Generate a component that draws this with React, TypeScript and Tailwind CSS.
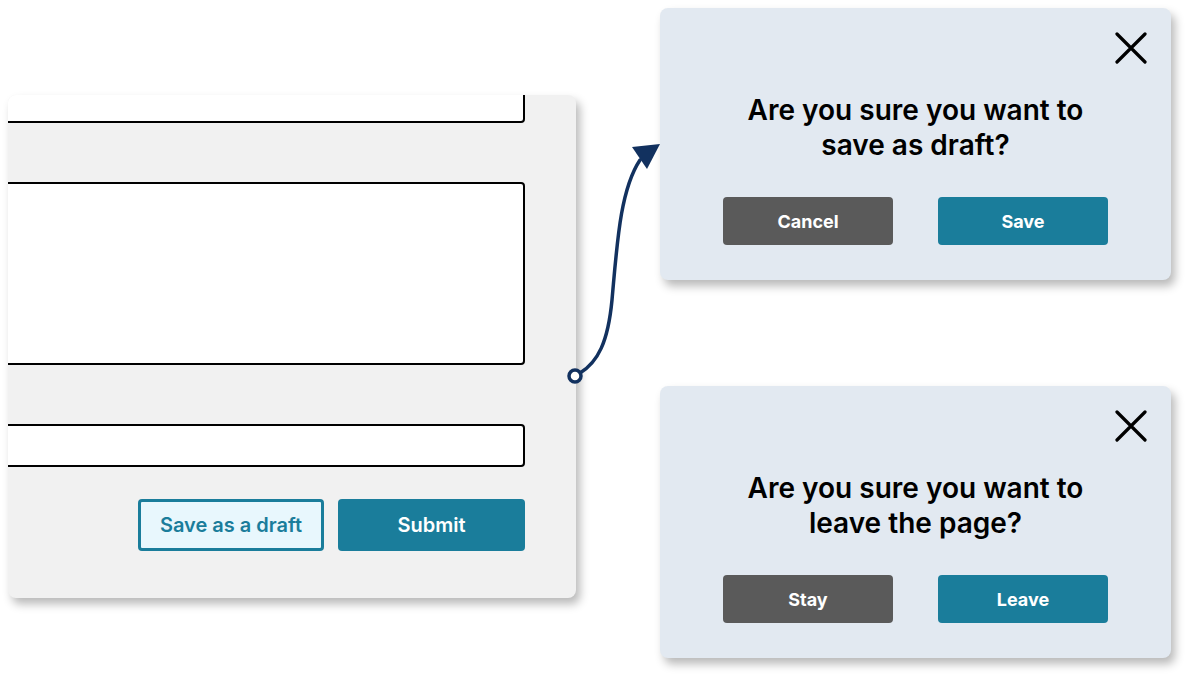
export default function App() {
  return (
    <div className="relative w-[1195px] h-[681px] bg-white flex overflow-hidden font-['Inter',sans-serif]">
      <div className="pt-[95px] pl-2">
        <FormPanel />
      </div>
      <div className="ml-[84px] pt-2 flex flex-col gap-[106px]">
        <ConfirmDialog
          lines={["Are you sure you want to", "save as draft?"]}
          secondary="Cancel"
          primary="Save"
        />
        <ConfirmDialog
          lines={["Are you sure you want to", "leave the page?"]}
          secondary="Stay"
          primary="Leave"
        />
      </div>
      <Connector />
    </div>
  )
}

function FormPanel() {
  return (
    <div className="w-[568px] h-[503px] bg-[#f1f1f1] rounded-lg shadow-[4px_6px_10px_rgba(0,0,0,0.28)] overflow-hidden pr-[51px] flex flex-col">
      <div className="h-[44px] -mt-[16px] -ml-[10px] bg-white border-2 border-black rounded-[4px]"></div>
      <div className="h-[183px] mt-[59px] -ml-[10px] bg-white border-2 border-black rounded-[4px]"></div>
      <div className="h-[43px] mt-[59px] -ml-[10px] bg-white border-2 border-black rounded-[4px]"></div>
      <div className="mt-[32px] flex justify-end gap-[14px]">
        <button className="w-[186px] h-[52px] rounded-[4px] border-[3px] border-[#1a7d9b] bg-[#e8f7fd] text-[#1a7d9b] text-[20px] font-semibold">
          Save as a draft
        </button>
        <button className="w-[187px] h-[52px] rounded-[4px] bg-[#1a7d9b] text-white text-[20px] font-semibold">
          Submit
        </button>
      </div>
    </div>
  )
}

function ConfirmDialog({ lines, secondary, primary }: { lines: string[]; secondary: string; primary: string }) {
  return (
    <div className="w-[511px] h-[272px] bg-[#e2e9f1] rounded-lg shadow-[4px_6px_10px_rgba(0,0,0,0.28)] flex flex-col">
      <div className="flex justify-end pt-[24px] pr-[24px]">
        <svg width="32" height="32" viewBox="0 0 32 32" fill="none" stroke="#000" strokeWidth="3.2" strokeLinecap="round">
          <path d="M2 2 L30 30 M30 2 L2 30" />
        </svg>
      </div>
      <div className="mt-[29px] text-center text-black text-[28px] font-semibold leading-[35px]">
        {lines.map((l) => (
          <div key={l}>{l}</div>
        ))}
      </div>
      <div className="mt-[34px] flex justify-center gap-[45px]">
        <button className="w-[170px] h-[48px] rounded-[4px] bg-[#5a5a5a] text-white text-[18px] font-bold">
          {secondary}
        </button>
        <button className="w-[170px] h-[48px] rounded-[4px] bg-[#1a7d9b] text-white text-[18px] font-bold">
          {primary}
        </button>
      </div>
    </div>
  )
}

function Connector() {
  return (
    <svg className="absolute left-0 top-0 pointer-events-none" width="1195" height="681" viewBox="0 0 1195 681" fill="none">
      <path
        d="M580 373 C598 362 608 342 612 300 C617 245 620 190 640 160"
        stroke="#12315f"
        strokeWidth="3.5"
        strokeLinecap="round"
      />
      <polygon points="632,147 660,144 647,169" fill="#12315f" />
      <circle cx="575" cy="376" r="6" fill="#fff" stroke="#12315f" strokeWidth="3.5" />
    </svg>
  )
}
